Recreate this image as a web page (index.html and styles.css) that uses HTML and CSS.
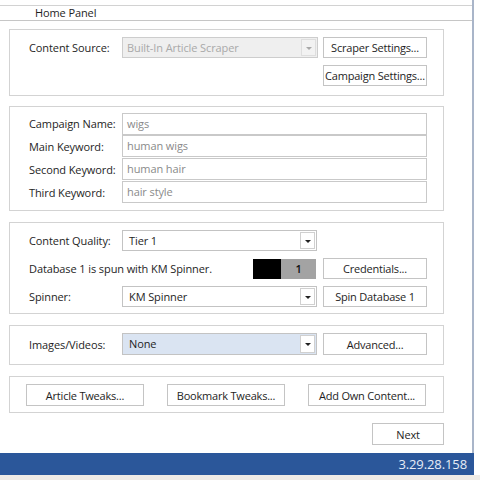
FILE: index.html
```html
<!DOCTYPE html>
<html>
<head lang="en">
  <meta charset="UTF-8">
  <title>Home Panel</title>
  <link rel="stylesheet" href="styles.css">
</head>
<body>
<div class="window">
  <div class="main">
    <div class="tabbar"><span class="tab">Home Panel</span></div>
    <div class="content">
      <div class="group g-source">
        <label class="lbl">Content Source:</label>
        <div class="combo disabled"><span class="val">Built-In Article Scraper</span><span class="arrow"></span></div>
        <button class="btn">Scraper Settings...</button>
        <span></span><span></span>
        <button class="btn">Campaign Settings...</button>
      </div>

      <div class="group g-campaign">
        <label class="lbl">Campaign Name:</label>
        <div class="field">wigs</div>
        <label class="lbl">Main Keyword:</label>
        <div class="field">human wigs</div>
        <label class="lbl">Second Keyword:</label>
        <div class="field">human hair</div>
        <label class="lbl">Third Keyword:</label>
        <div class="field">hair style</div>
      </div>

      <div class="group g-spin">
        <label class="lbl">Content Quality:</label>
        <div class="combo"><span class="val">Tier 1</span><span class="arrow"></span></div>
        <span></span>
        <div class="note">Database 1 is spun with KM Spinner.
          <div class="meter"><span class="meter-fill"></span><span class="meter-num">1</span></div>
        </div>
        <button class="btn">Credentials...</button>
        <label class="lbl">Spinner:</label>
        <div class="combo"><span class="val">KM Spinner</span><span class="arrow"></span></div>
        <button class="btn">Spin Database 1</button>
      </div>

      <div class="group g-media">
        <label class="lbl">Images/Videos:</label>
        <div class="combo selected"><span class="val">None</span><span class="arrow"></span></div>
        <button class="btn">Advanced...</button>
      </div>

      <div class="group g-tweaks">
        <button class="btn wide">Article Tweaks...</button>
        <button class="btn wide">Bookmark Tweaks...</button>
        <button class="btn wide">Add Own Content...</button>
      </div>

      <div class="footer">
        <button class="btn next">Next</button>
      </div>
    </div>
  </div>
  <div class="statusbar">3.29.28.158</div>
  <div class="bottomstrip"></div>
</div>
</body>
</html>
```

FILE: styles.css
```css
body {
  margin: 0;
  background: #fff;
  font-family: "Open Sans", "Noto Sans", sans-serif;
  font-size: 11px;
  letter-spacing: -0.1px;
  color: #1e1e1e;
}

.window {
  width: 480px;
  height: 480px;
  display: flex;
  flex-direction: column;
  overflow: hidden;
}

.main {
  width: 474px;
  height: 453px;
  box-sizing: border-box;
  border-right: 2px solid #a9b5c9;
}

.tabbar {
  margin-top: 5px;
  height: 14px;
  line-height: 14px;
  padding-left: 35px;
  border-top: 1px solid #d2d2d2;
  border-bottom: 1px solid #c6c6c6;
}

.content {
  padding: 8px 0 0 9px;
  width: 435px;
}

.group {
  box-sizing: border-box;
  width: 435px;
  border: 1px solid #d3d3d3;
  display: grid;
  grid-template-columns: 87px 195px 104px;
  column-gap: 6px;
  padding: 7px 16px 9px 19px;
  align-items: center;
}

.g-source {
  grid-template-rows: 21px 21px;
  row-gap: 7px;
  margin-bottom: 10px;
}

.g-source .combo {
  margin-right: -1px;
}

.g-campaign {
  grid-template-columns: 87px 305px;
  grid-template-rows: 21px 22px 22px 22px;
  row-gap: 1px;
  padding-top: 6px;
  padding-bottom: 7px;
  margin-bottom: 11px;
}

.g-spin {
  grid-template-rows: 21px 21px 21px;
  row-gap: 7px;
  padding-bottom: 6px;
  margin-bottom: 11px;
}

.g-media {
  grid-template-rows: 22px;
  padding-bottom: 9px;
  margin-bottom: 11px;
}

.g-tweaks {
  display: flex;
  gap: 23px;
  padding: 7px 0 6px 16px;
  margin-bottom: 10px;
}

.lbl {
  white-space: nowrap;
}

.btn {
  box-sizing: border-box;
  height: 21px;
  padding: 0;
  border: 1px solid #c4c4c4;
  background: #fff;
  font-family: inherit;
  font-size: 11px;
  letter-spacing: -0.2px;
  color: #1e1e1e;
  text-align: center;
  white-space: nowrap;
}

.g-media .btn {
  height: 22px;
}

.btn.wide {
  width: 118px;
  height: 22px;
}

.field {
  box-sizing: border-box;
  height: 22px;
  line-height: 20px;
  padding-left: 4px;
  border: 1px solid #c9c9c9;
  color: #8a8a8a;
}

.combo {
  box-sizing: border-box;
  height: 21px;
  display: flex;
  align-items: stretch;
  border: 1px solid #c3c3c3;
  background: #fff;
}

.g-media .combo {
  height: 22px;
}

.combo .val {
  flex: 1;
  line-height: 19px;
  padding-left: 6px;
}

.combo .arrow {
  width: 13px;
  margin: 1px;
  border: 1px solid #d0d0d0;
  background: #fff;
  position: relative;
}

.combo .arrow::after {
  content: "";
  position: absolute;
  left: 4px;
  top: 7px;
  border-left: 3px solid transparent;
  border-right: 3px solid transparent;
  border-top: 3px solid #222;
}

.combo.disabled {
  background: #efefef;
  border-color: #cdcdcd;
}

.combo.disabled .val {
  color: #a9a9a9;
  padding-left: 4px;
}

.combo.disabled .arrow {
  background: #f2f2f2;
  border-color: #dedede;
}

.combo.disabled .arrow::after {
  border-top-color: #a8a8a8;
}

.combo.selected {
  background: #dae4f2;
}

.note {
  grid-column: 1 / 3;
  display: flex;
  justify-content: space-between;
  align-items: center;
  white-space: nowrap;
}

.meter {
  display: flex;
  height: 20px;
  margin-right: 1px;
}

.meter-fill {
  width: 28px;
  background: #000;
}

.meter-num {
  width: 35px;
  background: #a3a3a3;
  text-align: center;
  line-height: 20px;
  font-weight: 600;
  color: #111;
}

.footer {
  display: flex;
  justify-content: flex-end;
}

.btn.next {
  width: 72px;
  height: 22px;
}

.statusbar {
  width: 474px;
  height: 22px;
  box-sizing: border-box;
  background: #2b579a;
  color: #e6ecf6;
  font-size: 13px;
  line-height: 22px;
  text-align: right;
  padding-right: 7px;
}

.bottomstrip {
  flex: 1;
  background: #efebe6;
}
```
